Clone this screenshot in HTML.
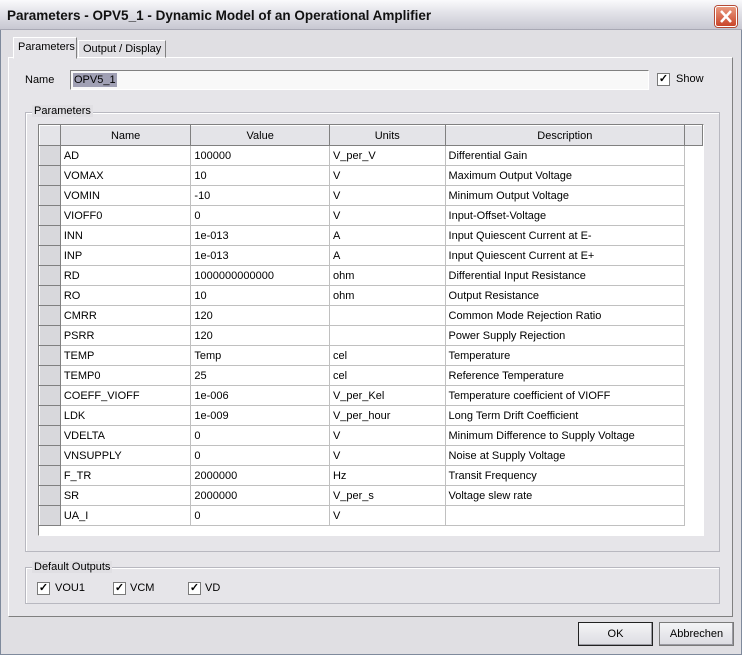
<!DOCTYPE html>
<html><head><style>
*{margin:0;padding:0;box-sizing:border-box}
body{width:742px;height:655px;overflow:hidden;background:#e0dfe3;font-family:"Liberation Sans",sans-serif;font-size:11px;color:#000;position:relative}
.a{position:absolute}
#win{left:0;top:0;width:742px;height:655px;border:1px solid #7f8a9c;border-top:none;background:#e0dfe3}
#title{left:0;top:0;width:742px;height:30px;background:linear-gradient(#fafafc,#e4e4ea 40%,#c8c8d2);border-bottom:1px solid #a8a8b4}
#title span{position:absolute;left:7px;top:8px;font-weight:bold;font-size:13.5px;color:#111;white-space:nowrap}
#close{left:715px;top:6px;width:22px;height:21px;border-radius:3px;background:linear-gradient(#e99a80,#c9452a);border:1px solid #fff;box-shadow:0 0 0 1px #b54a35}
.sunk{border:1px solid;border-color:#808080 #fff #fff #808080}
.group{border:1px solid #b8b8c0;box-shadow:1px 1px 0 #fff inset}
.glabel{background:#e0dfe3;padding:0 2px}
.cb{width:13px;height:13px;border:1px solid #7a7a7a;background:#fff;font-size:11px;line-height:11px;text-align:center;font-weight:bold}
table{border-collapse:collapse;table-layout:fixed}
td{height:20px;border:1px solid #c0c0c0;padding:0 3px;white-space:nowrap;overflow:hidden}
td.rh{background:#d8d8dc;border:1px solid;border-color:#fff #808080 #808080 #fff;padding:0}
th{height:20px;font-weight:normal;background:#e4e4e8;border:1px solid;border-color:#fff #808080 #808080 #fff}
.btn{border:1px solid #222;background:linear-gradient(#f4f4f6,#dcdce2);text-align:center;line-height:22px;box-shadow:inset -1px -1px 0 #9a9aa2}
</style></head><body>
<div id="win" class="a"></div>
<div id="title" class="a"><span>Parameters - OPV5_1 - Dynamic Model of an Operational Amplifier</span></div>
<div id="close" class="a"><svg width="20" height="19"><path d="M5 4L15 15M15 4L5 15" stroke="#fff" stroke-width="2.5"/></svg></div>

<div class="a" style="left:8px;top:57px;width:725px;height:560px;border:1px solid;border-color:#fff #808080 #808080 #fff;background:#e6e5e9"></div>
<div class="a" style="left:13px;top:37px;width:64px;height:22px;border:1px solid;border-color:#fff #808080 transparent #fff;background:#e6e5e9;padding:3px 0 0 4px">Parameters</div>
<div class="a" style="left:78px;top:40px;width:88px;height:18px;border:1px solid;border-color:#fff #808080 transparent #fff;padding:2px 0 0 4px">Output / Display</div>

<div class="a" style="left:25px;top:74px">Name</div>
<div class="a sunk" style="left:70px;top:70px;width:579px;height:20px;background:#f8f8f8"><span style="background:#a0a0b4;margin:2px;display:inline-block;padding:0 1px;line-height:14px">OPV5_1</span></div>
<div class="a cb" style="left:657px;top:73px">✓</div>
<div class="a" style="left:676px;top:73px">Show</div>

<div class="a group" style="left:25px;top:112px;width:695px;height:440px"></div>
<div class="a glabel" style="left:32px;top:105px">Parameters</div>
<div class="a" style="left:38px;top:124px;width:666px;height:412px;border:1px solid;border-color:#808080 #fff #fff #808080;background:#fff;overflow:hidden">
<table>
<colgroup><col style="width:21px"><col style="width:131px"><col style="width:139px"><col style="width:116px"><col style="width:240px"><col style="width:18px"></colgroup>
<tr><th></th><th>Name</th><th>Value</th><th>Units</th><th>Description</th><th></th></tr>
<tr><td class="rh"></td><td>AD</td><td>100000</td><td>V_per_V</td><td>Differential Gain</td></tr>
<tr><td class="rh"></td><td>VOMAX</td><td>10</td><td>V</td><td>Maximum Output Voltage</td></tr>
<tr><td class="rh"></td><td>VOMIN</td><td>-10</td><td>V</td><td>Minimum Output Voltage</td></tr>
<tr><td class="rh"></td><td>VIOFF0</td><td>0</td><td>V</td><td>Input-Offset-Voltage</td></tr>
<tr><td class="rh"></td><td>INN</td><td>1e-013</td><td>A</td><td>Input Quiescent Current at E-</td></tr>
<tr><td class="rh"></td><td>INP</td><td>1e-013</td><td>A</td><td>Input Quiescent Current at E+</td></tr>
<tr><td class="rh"></td><td>RD</td><td>1000000000000</td><td>ohm</td><td>Differential Input Resistance</td></tr>
<tr><td class="rh"></td><td>RO</td><td>10</td><td>ohm</td><td>Output Resistance</td></tr>
<tr><td class="rh"></td><td>CMRR</td><td>120</td><td></td><td>Common Mode Rejection Ratio</td></tr>
<tr><td class="rh"></td><td>PSRR</td><td>120</td><td></td><td>Power Supply Rejection</td></tr>
<tr><td class="rh"></td><td>TEMP</td><td>Temp</td><td>cel</td><td>Temperature</td></tr>
<tr><td class="rh"></td><td>TEMP0</td><td>25</td><td>cel</td><td>Reference Temperature</td></tr>
<tr><td class="rh"></td><td>COEFF_VIOFF</td><td>1e-006</td><td>V_per_Kel</td><td>Temperature coefficient of VIOFF</td></tr>
<tr><td class="rh"></td><td>LDK</td><td>1e-009</td><td>V_per_hour</td><td>Long Term Drift Coefficient</td></tr>
<tr><td class="rh"></td><td>VDELTA</td><td>0</td><td>V</td><td>Minimum Difference to Supply Voltage</td></tr>
<tr><td class="rh"></td><td>VNSUPPLY</td><td>0</td><td>V</td><td>Noise at Supply Voltage</td></tr>
<tr><td class="rh"></td><td>F_TR</td><td>2000000</td><td>Hz</td><td>Transit Frequency</td></tr>
<tr><td class="rh"></td><td>SR</td><td>2000000</td><td>V_per_s</td><td>Voltage slew rate</td></tr>
<tr><td class="rh"></td><td>UA_I</td><td>0</td><td>V</td><td></td></tr>
</table></div>

<div class="a group" style="left:25px;top:567px;width:695px;height:37px"></div>
<div class="a glabel" style="left:32px;top:561px">Default Outputs</div>
<div class="a cb" style="left:37px;top:582px">✓</div><div class="a" style="left:55px;top:582px">VOU1</div>
<div class="a cb" style="left:113px;top:582px">✓</div><div class="a" style="left:130px;top:582px">VCM</div>
<div class="a cb" style="left:188px;top:582px">✓</div><div class="a" style="left:205px;top:582px">VD</div>

<div class="a btn" style="left:578px;top:622px;width:75px;height:24px">OK</div>
<div class="a btn" style="left:659px;top:622px;width:75px;height:24px;border-color:#7a7a7a">Abbrechen</div>
</body></html>
